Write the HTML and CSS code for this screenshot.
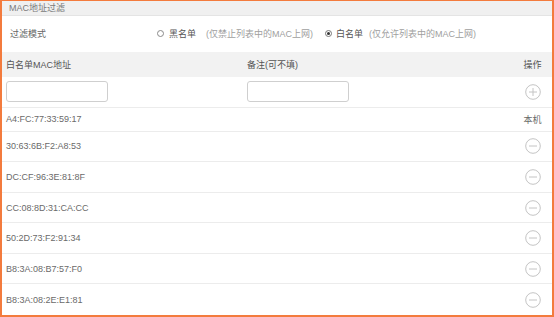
FILE: index.html
```html
<!DOCTYPE html>
<html lang="zh-CN">
<head>
<meta charset="utf-8">
<title>MAC地址过滤</title>
<link rel="stylesheet" href="styles.css">
</head>
<body>
<div class="panel">
  <div class="panel-title">MAC地址过滤</div>
  <div class="mode-row">
    <span class="mode-label">过滤模式</span>
    <label class="radio-opt opt-black">
      <span class="radio"></span>
      <span class="opt-name">黑名单</span>
      <span class="opt-hint">(仅禁止列表中的MAC上网)</span>
    </label>
    <label class="radio-opt opt-white">
      <span class="radio checked"></span>
      <span class="opt-name">白名单</span>
      <span class="opt-hint">(仅允许列表中的MAC上网)</span>
    </label>
  </div>
  <div class="row head">
    <span>白名单MAC地址</span>
    <span>备注(可不填)</span>
    <span class="op">操作</span>
  </div>
  <div class="row input-row">
    <span><input class="field" type="text"></span>
    <span><input class="field" type="text"></span>
    <span class="op">
      <svg class="icon" viewBox="0 0 16 16" width="16" height="16"><circle cx="8" cy="8" r="7.3" fill="none" stroke="#c4c4c4" stroke-width="1"/><path d="M4 8h8M8 4v8" stroke="#c4c4c4" stroke-width="1"/></svg>
    </span>
  </div>
  <div class="row self-row">
    <span>A4:FC:77:33:59:17</span>
    <span></span>
    <span class="op">本机</span>
  </div>
  <div class="row item">
    <span>30:63:6B:F2:A8:53</span><span></span>
    <span class="op"><svg class="icon" viewBox="0 0 16 16" width="16" height="16"><circle cx="8" cy="8" r="7.3" fill="none" stroke="#c4c4c4" stroke-width="1"/><path d="M4 8h8" stroke="#c4c4c4" stroke-width="1"/></svg></span>
  </div>
  <div class="row item">
    <span>DC:CF:96:3E:81:8F</span><span></span>
    <span class="op"><svg class="icon" viewBox="0 0 16 16" width="16" height="16"><circle cx="8" cy="8" r="7.3" fill="none" stroke="#c4c4c4" stroke-width="1"/><path d="M4 8h8" stroke="#c4c4c4" stroke-width="1"/></svg></span>
  </div>
  <div class="row item">
    <span>CC:08:8D:31:CA:CC</span><span></span>
    <span class="op"><svg class="icon" viewBox="0 0 16 16" width="16" height="16"><circle cx="8" cy="8" r="7.3" fill="none" stroke="#c4c4c4" stroke-width="1"/><path d="M4 8h8" stroke="#c4c4c4" stroke-width="1"/></svg></span>
  </div>
  <div class="row item">
    <span>50:2D:73:F2:91:34</span><span></span>
    <span class="op"><svg class="icon" viewBox="0 0 16 16" width="16" height="16"><circle cx="8" cy="8" r="7.3" fill="none" stroke="#c4c4c4" stroke-width="1"/><path d="M4 8h8" stroke="#c4c4c4" stroke-width="1"/></svg></span>
  </div>
  <div class="row item">
    <span>B8:3A:08:B7:57:F0</span><span></span>
    <span class="op"><svg class="icon" viewBox="0 0 16 16" width="16" height="16"><circle cx="8" cy="8" r="7.3" fill="none" stroke="#c4c4c4" stroke-width="1"/><path d="M4 8h8" stroke="#c4c4c4" stroke-width="1"/></svg></span>
  </div>
  <div class="row item last">
    <span>B8:3A:08:2E:E1:81</span><span></span>
    <span class="op"><svg class="icon" viewBox="0 0 16 16" width="16" height="16"><circle cx="8" cy="8" r="7.3" fill="none" stroke="#c4c4c4" stroke-width="1"/><path d="M4 8h8" stroke="#c4c4c4" stroke-width="1"/></svg></span>
  </div>
</div>
</body>
</html>
```
FILE: styles.css
```css
html, body {
  margin: 0;
  padding: 0;
  background: #ffffff;
}
.panel {
  box-sizing: border-box;
  width: 554px;
  height: 317px;
  border-style: solid;
  border-color: #f37b3d;
  border-width: 1px 2px 2px 2px;
  background: #ffffff;
  font-family: "Liberation Sans", "Noto Sans CJK SC", sans-serif;
  font-size: 9px;
  color: #6a6a6a;
  overflow: hidden;
  display: flex;
  flex-direction: column;
}
.panel-title {
  box-sizing: border-box;
  height: 15px;
  line-height: 14px;
  padding-left: 7px;
  background: #f0f0f0;
  border-bottom: 1px solid #e4e4e4;
  color: #7a7a7a;
}
.mode-row {
  box-sizing: border-box;
  height: 36px;
  display: flex;
  align-items: center;
  padding-left: 8px;
}
.mode-label {
  width: 147px;
  color: #666;
}
.radio-opt {
  display: flex;
  align-items: center;
}
.opt-black {
  margin-right: 12px;
}
.radio {
  box-sizing: border-box;
  width: 7px;
  height: 7px;
  border: 1px solid #8a8a8a;
  border-radius: 50%;
  margin-right: 5px;
  position: relative;
}
.radio.checked {
  border-color: #777;
}
.radio.checked::after {
  content: "";
  position: absolute;
  left: 1px;
  top: 1px;
  width: 3px;
  height: 3px;
  border-radius: 50%;
  background: #333;
}
.opt-name {
  color: #555;
  margin-right: 10px;
}
.opt-white .radio {
  margin-right: 4px;
}
.opt-white .opt-name {
  margin-right: 6px;
}
.opt-hint {
  color: #a0a0a0;
}
.row {
  box-sizing: border-box;
  display: grid;
  grid-template-columns: 241px 1fr 39px;
  align-items: center;
  padding-left: 4px;
  border-bottom: 1px solid #ececec;
}
.row .op {
  text-align: center;
  display: flex;
  justify-content: center;
  align-items: center;
}
.head {
  height: 25px;
  background: #f2f2f2;
  border-bottom: none;
  color: #555;
}
.input-row {
  height: 31px;
}
.field {
  box-sizing: border-box;
  display: block;
  width: 102px;
  height: 21px;
  margin: 0;
  padding: 0 4px;
  border: 1px solid #cfcfcf;
  border-radius: 3px;
  background: #fff;
  font: inherit;
}
.icon {
  display: block;
}
.self-row {
  height: 24px;
}
.item {
  height: 30.7px;
}
.item.last {
  border-bottom: none;
}
```
